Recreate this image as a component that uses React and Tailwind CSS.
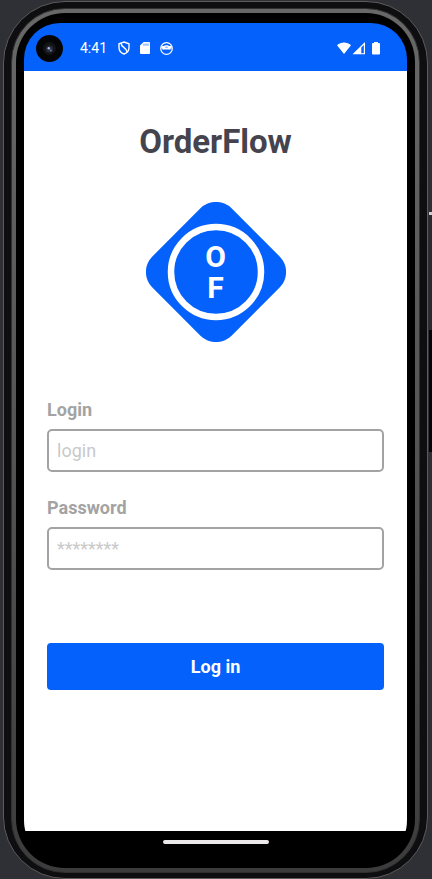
function ShieldIcon() {
  return (
    <svg width="12" height="14" viewBox="0 0 12 14" fill="none" stroke="white" strokeWidth="1.4" aria-hidden="true">
      <path d="M6 1 L11 2.8 V6.5 C11 9.6 8.9 12 6 13 C3.1 12 1 9.6 1 6.5 V2.8 Z" />
      <path d="M3.2 2.2 C2.8 6.6 8.6 6 9 11" />
    </svg>
  );
}

function SdCardIcon() {
  return (
    <svg width="10" height="12" viewBox="0 0 10 12" aria-hidden="true">
      <path d="M3.6 0 H9 A1 1 0 0 1 10 1 V11 A1 1 0 0 1 9 12 H1 A1 1 0 0 1 0 11 V3.6 Z" fill="white" />
      <path d="M4 1.5 V3.8 M6 1.5 V3.8 M8 1.5 V3.8" stroke="#0561fc" strokeWidth="0.7" />
    </svg>
  );
}

function FaceIcon() {
  return (
    <svg width="13" height="13" viewBox="0 0 13 13" aria-hidden="true">
      <circle cx="6.5" cy="6.5" r="5.8" fill="none" stroke="white" strokeWidth="1.2" />
      <path d="M1.4 3.6 C3.5 4.4 4.6 3.6 5.2 3.2 H7.8 C8.4 3.6 9.5 4.4 11.6 3.6 V6.4 L10.4 6.8 V8 L9.2 7.4 H3.8 L2.6 8 V6.8 L1.4 6.4 Z" fill="white" />
      <path d="M5.2 5.2 H7.8" stroke="#0561fc" strokeWidth="0.6" />
    </svg>
  );
}

function StatusIcons() {
  return (
    <svg width="44" height="13" viewBox="0 0 44 13" fill="white" role="img" aria-label="Wi-Fi, signal and battery">
      <path d="M0 3.2 C4 -0.4 10 -0.4 14 3.2 L7 12 Z" />
      <path fillRule="evenodd" d="M28 0 V12.3 H15.5 Z M26.8 3 L24.3 5.6 V11.2 H26.8 Z" />
      <path d="M37 0 H41 V1 H42 A1 1 0 0 1 43 2 V11.6 A1 1 0 0 1 42 12.6 H36 A1 1 0 0 1 35 11.6 V2 A1 1 0 0 1 36 1 H37 Z" />
    </svg>
  );
}

function Camera() {
  return (
    <svg width="27" height="27" viewBox="0 0 27 27" aria-hidden="true">
      <circle cx="13.5" cy="13.5" r="13.5" fill="#050505" />
      <circle cx="13.5" cy="13.5" r="6.5" fill="#131417" />
      <circle cx="13.5" cy="14" r="3.6" fill="#282b3c" />
      <circle cx="12.8" cy="13.2" r="1.2" fill="#aab4d4" />
      <circle cx="14.8" cy="15.4" r="1" fill="#6f7ba6" />
    </svg>
  );
}

function Logo() {
  return (
    <div className="relative">
      <svg width="140" height="140" viewBox="0 0 140 140" aria-hidden="true">
        <rect x="14" y="14" width="112" height="112" rx="22" fill="#0561fc" transform="rotate(45 70 70)" />
        <circle cx="70" cy="70" r="45" fill="none" stroke="white" strokeWidth="6.5" />
      </svg>
      <div className="absolute inset-0 flex items-center justify-center text-center text-3xl leading-[31px] font-bold whitespace-pre-line text-white">
        {"O\nF"}
      </div>
    </div>
  );
}

function Field({ id, label, type, placeholder }) {
  return (
    <div className="flex flex-col gap-[7px]">
      <label htmlFor={id} className="text-lg leading-6 font-bold text-[#a3a3a3]">
        {label}
      </label>
      <input
        id={id}
        type={type}
        placeholder={placeholder}
        className="h-[43px] w-full rounded-[5px] border-2 border-[#a3a3a3] bg-white px-2 text-lg text-[#45444e] outline-none placeholder:text-[#c9c9c9]"
      />
    </div>
  );
}

export default function App() {
  return (
    <div className="relative flex min-h-screen flex-col bg-[#2f3035] pt-px pr-1 pl-[3px] font-['Roboto',sans-serif]">
      <div className="absolute top-[212px] right-0 h-[118px] w-[3px] border-t-[3px] border-[#d0d0d0] bg-[#2b2b2e]" />
      <div className="absolute top-[330px] right-0 h-[122px] w-[3px] bg-[#050507]" />
      <div className="relative flex flex-1 flex-col rounded-[62px] border border-[#5c5c5c] bg-[#0e0e10] px-[7px] pt-[6px] pb-[5px]">
        <div className="flex flex-1 flex-col rounded-[54px] border border-[#303030] bg-linear-to-b from-[#686868] via-[#545454] to-[#3c3c3c] p-1">
          <div className="flex flex-1 flex-col rounded-[49px] bg-black px-2 pt-[10px]">
            <div className="flex flex-1 flex-col overflow-hidden rounded-t-[36px] rounded-b-[48px]">
              <header className="flex h-12 items-center bg-[#0561fc] pt-0.5 pr-[26px] pl-3 text-white">
                <Camera />
                <span className="ml-[17px] text-sm">4:41</span>
                <div className="ml-[11px] flex items-center gap-[10px]">
                  <ShieldIcon />
                  <SdCardIcon />
                  <FaceIcon />
                </div>
                <div className="ml-auto">
                  <StatusIcons />
                </div>
              </header>
              <main className="flex flex-1 flex-col items-center bg-white px-[23px] pt-[51px]">
                <h1 className="text-[33px] leading-10 font-bold text-[#45444e]">OrderFlow</h1>
                <div className="mt-10">
                  <Logo />
                </div>
                <form className="mt-14 flex w-full flex-col gap-6">
                  <Field id="login" label="Login" type="text" placeholder="login" />
                  <Field id="password" label="Password" type="password" placeholder="********" />
                  <button
                    type="button"
                    className="mt-[49px] h-[47px] rounded-[4px] bg-[#0561fc] text-lg font-bold text-white"
                  >
                    Log in
                  </button>
                </form>
              </main>
              <footer className="flex h-[37px] justify-center bg-black pt-[9px]">
                <div className="h-1 w-[106px] rounded-full bg-[#eceaea]" />
              </footer>
            </div>
          </div>
        </div>
      </div>
    </div>
  );
}
